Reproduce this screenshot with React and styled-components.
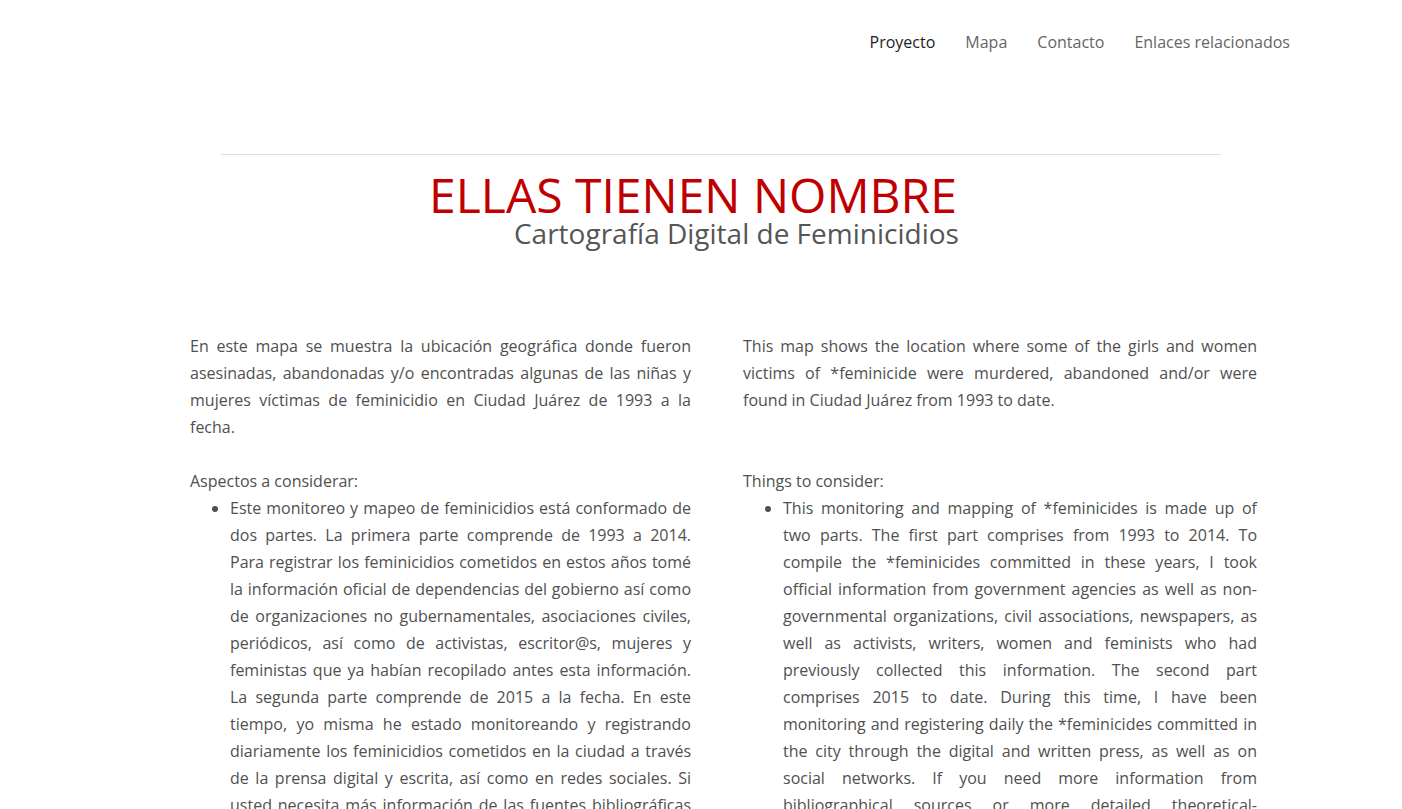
import React from "react";
import styled, { createGlobalStyle } from "styled-components";

const Global = createGlobalStyle`
  html, body { margin: 0; padding: 0; background: #fff; }
  body { font-family: "Open Sans", "Noto Sans", sans-serif; color: #505050; }
`;

const Page = styled.div`
  width: 1402px;
  overflow: hidden;
`;

const NavBar = styled.nav`
  display: flex;
  justify-content: flex-end;
  align-items: center;
  gap: 30px;
  height: 84px;
  padding-right: 112px;
`;

const NavLink = styled.a`
  font-size: 16px;
  line-height: 22px;
  color: ${(p) => (p.$active ? "#1e1e1e" : "#666")};
  text-decoration: none;
  cursor: pointer;
`;

const Rule = styled.hr`
  width: 1000px;
  margin: 70px 0 0 221px;
  border: 0;
  border-top: 1px solid #ddd;
  height: 0;
`;

const TitleWrap = styled.div`
  display: flex;
  justify-content: center;
  padding: 16px 16px 0 0;
`;

const TitleBlock = styled.div`
  display: flex;
  flex-direction: column;
  align-items: flex-end;
`;

const Title = styled.h1`
  margin: 0;
  font-size: 48px;
  line-height: 48px;
  font-weight: 400;
  color: #c00000;
`;

const Subtitle = styled.h2`
  margin: 0 -2px 0 0;
  font-size: 28px;
  line-height: 28px;
  font-weight: 400;
  color: #555;
`;

const Columns = styled.section`
  display: grid;
  grid-template-columns: 501px 514px;
  column-gap: 52px;
  row-gap: 27px;
  padding: 86px 0 0 190px;
`;

const Para = styled.p`
  margin: 0;
  font-size: 16px;
  line-height: 27px;
  text-align: justify;
`;

const Block = styled.div`
  font-size: 16px;
  line-height: 27px;
`;

const List = styled.ul`
  margin: 0;
  padding-left: 40px;
  text-align: justify;
`;

export default function App() {
  return (
    <Page>
      <Global />
      <NavBar>
        <NavLink $active>Proyecto</NavLink>
        <NavLink>Mapa</NavLink>
        <NavLink>Contacto</NavLink>
        <NavLink>Enlaces relacionados</NavLink>
      </NavBar>
      <Rule />
      <TitleWrap>
        <TitleBlock>
          <Title>ELLAS TIENEN NOMBRE</Title>
          <Subtitle>Cartografía Digital de Feminicidios</Subtitle>
        </TitleBlock>
      </TitleWrap>
      <Columns>
        <Para>
          En este mapa se muestra la ubicación geográfica donde fueron
          asesinadas, abandonadas y/o encontradas algunas de las niñas y
          mujeres víctimas de feminicidio en Ciudad Juárez de 1993 a la fecha.
        </Para>
        <Para>
          This map shows the location where some of the girls and women
          victims of *feminicide were murdered, abandoned and/or were found in
          Ciudad Juárez from 1993 to date.
        </Para>
        <Block>
          Aspectos a considerar:
          <List>
            <li>
              Este monitoreo y mapeo de feminicidios está conformado de dos
              partes. La primera parte comprende de 1993 a 2014. Para registrar
              los feminicidios cometidos en estos años tomé la información
              oficial de dependencias del gobierno así como de organizaciones no
              gubernamentales, asociaciones civiles, periódicos, así como de
              activistas, escritor@s, mujeres y feministas que ya habían
              recopilado antes esta información. La segunda parte comprende de
              2015 a la fecha. En este tiempo, yo misma he estado monitoreando y
              registrando diariamente los feminicidios cometidos en la ciudad a
              través de la prensa digital y escrita, así como en redes sociales.
              Si usted necesita más información de las fuentes bibliográficas o
              información teórico-metodológica más detallada, por favor,
              contácteme.
            </li>
          </List>
        </Block>
        <Block>
          Things to consider:
          <List>
            <li>
              This monitoring and mapping of *feminicides is made up of two
              parts. The first part comprises from 1993 to 2014. To compile the
              *feminicides committed in these years, I took official information
              from government agencies as well as non-governmental
              organizations, civil associations, newspapers, as well as
              activists, writers, women and feminists who had previously
              collected this information. The second part comprises 2015 to
              date. During this time, I have been monitoring and registering
              daily the *feminicides committed in the city through the digital
              and written press, as well as on social networks. If you need more
              information from bibliographical sources or more detailed
              theoretical-methodological information, please contact me.
            </li>
          </List>
        </Block>
      </Columns>
    </Page>
  );
}
